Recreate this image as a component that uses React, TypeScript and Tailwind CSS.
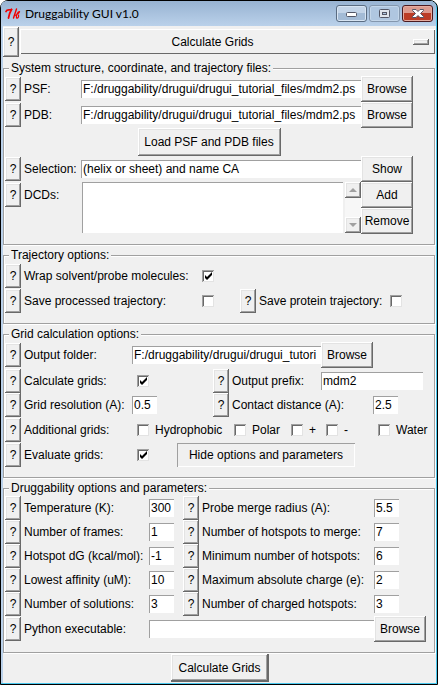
import { useId, type ReactNode } from "react";

const RAISED =
  "bg-[#f0f0f0] shadow-[inset_-1px_-1px_0_#696969,inset_1px_1px_0_#ffffff,inset_-2px_-2px_0_#a0a0a0,inset_2px_2px_0_#e3e3e3]";
const SUNKEN = "bg-white shadow-[inset_1px_1px_0_#a0a0a0]";

function Help({ topic, className = "h-6" }: { topic: string; className?: string }) {
  return (
    <button type="button" aria-label={`Help: ${topic}`} className={`w-4 shrink-0 ${RAISED} ${className}`}>
      ?
    </button>
  );
}

function PushButton({ children, className = "" }: { children: ReactNode; className?: string }) {
  return (
    <button type="button" className={`shrink-0 whitespace-nowrap ${RAISED} ${className}`}>
      {children}
    </button>
  );
}

function Entry({ id, value, className = "" }: { id: string; value: string; className?: string }) {
  return (
    <input
      id={id}
      type="text"
      defaultValue={value}
      className={`h-[18px] min-w-0 pl-0.5 outline-none ${SUNKEN} ${className}`}
    />
  );
}

function Check({ id, checked = false }: { id: string; checked?: boolean }) {
  return (
    <span className="grid size-3 shrink-0">
      <input
        id={id}
        type="checkbox"
        defaultChecked={checked}
        className="peer col-start-1 row-start-1 size-3 appearance-none bg-white shadow-[inset_1px_1px_0_#a0a0a0,inset_-1px_-1px_0_#e3e3e3,inset_2px_2px_0_#696969]"
      />
      <svg
        viewBox="0 0 12 12"
        className="pointer-events-none col-start-1 row-start-1 hidden size-3 peer-checked:block"
      >
        <path d="M3 5v3l2 2 5-5V2L5 7z" fill="#000" />
      </svg>
    </span>
  );
}

function Group({ title, children, className = "" }: { title: string; children: ReactNode; className?: string }) {
  return (
    <fieldset
      className={`mr-px min-w-0 border border-[#a0a0a0] pl-px shadow-[1px_1px_0_#ffffff,inset_1px_1px_0_#ffffff] ${className}`}
    >
      <legend className="ml-1 h-4 bg-[#f0f0f0] px-0.5 leading-4">{title}</legend>
      {children}
    </fieldset>
  );
}

function Field({
  label,
  labelWidth,
  children,
  className = "",
}: {
  label: string;
  labelWidth: string;
  children: (id: string) => ReactNode;
  className?: string;
}) {
  const id = useId();
  return (
    <div className={`flex items-center ${className}`}>
      <Help topic={label} />
      <label htmlFor={id} className={`shrink-0 whitespace-nowrap pl-[3px] ${labelWidth}`}>
        {label}
      </label>
      {children(id)}
    </div>
  );
}

function GridOption({ label, className = "" }: { label: string; className?: string }) {
  const id = useId();
  return (
    <span className={`flex shrink-0 items-center gap-1.5 ${className}`}>
      <Check id={id} />
      <label htmlFor={id}>{label}</label>
    </span>
  );
}

function TitleBar() {
  const frame = "flex h-[17px] w-[31px] items-center justify-center rounded-[3px] border";
  return (
    <header className="flex h-[25px] items-center rounded-t-md bg-gradient-to-b from-[#98b3d2] to-[#bad1ea] pr-[3px] pl-1">
      <svg viewBox="0 0 16 16" className="size-4 shrink-0" fill="none" stroke="#f00000" strokeLinecap="round">
        <path d="M1 5.500C2 3 4 4.500 6.500 3.500" strokeWidth="1.800" />
        <path d="M6.500 3.500C5 6 4 9 3.500 12" strokeWidth="1.800" />
        <path d="M11.500 3L8.500 12" strokeWidth="1.400" />
        <path d="M9.500 9.500C11.500 9 14.500 7 14.500 5.500C13 5.500 11 8.500 11.500 12C13 12.500 14 11 13.500 9" strokeWidth="1.200" />
      </svg>
      <h1 className="ml-1 flex-1 font-['Lato','Open_Sans',sans-serif] text-[12px]">Druggability GUI v1.0</h1>
      <div className="flex gap-0.5">
        <button
          type="button"
          aria-label="Minimize"
          className={`${frame} border-[#5a6c82] bg-gradient-to-b from-[#c3d4e8] from-50% to-[#a3bbd6] to-50% shadow-[inset_0_0_0_1px_#d8e5f3]`}
        >
          <svg viewBox="0 0 11 5" className="mt-0.5 h-[5px] w-[11px]">
            <rect x="0.5" y="0.5" width="10" height="4" rx="1" fill="#fff" stroke="#535666" />
          </svg>
        </button>
        <button
          type="button"
          aria-label="Maximize"
          className={`${frame} border-[#8497ae] bg-[#afc6e0] shadow-[inset_0_0_0_1px_#c3d6ea]`}
        >
          <svg viewBox="0 0 11 9" className="h-[9px] w-[11px]">
            <rect x="0.5" y="0.5" width="10" height="8" rx="1" fill="#dfe4ec" stroke="#535666" />
            <rect x="3.500" y="3.500" width="4" height="2" fill="#afc6e0" stroke="#535666" />
          </svg>
        </button>
        <button
          type="button"
          aria-label="Close"
          className={`${frame} border-[#4b1a20] bg-gradient-to-b from-[#dc9a8e] from-50% to-[#bb3c26] to-50% shadow-[inset_0_0_0_1px_#e5aca0]`}
        >
          <svg viewBox="0 0 12 9" className="h-[9px] w-3">
            <path
              d="M0.5 0.5H4L6 2.500L8 0.500H11.500V1.500L8.500 4.500L11.500 7.500V8.500H8L6 6.500L4 8.500H0.500V7.500L3.500 4.500L0.500 1.500Z"
              fill="#fff"
              stroke="#535666"
            />
          </svg>
        </button>
      </div>
    </header>
  );
}

const PARAMETERS = [
  ["Temperature (K):", "300", "Probe merge radius (A):", "5.5"],
  ["Number of frames:", "1", "Number of hotspots to merge:", "7"],
  ["Hotspot dG (kcal/mol):", "-1", "Minimum number of hotspots:", "6"],
  ["Lowest affinity (uM):", "10", "Maximum absolute charge (e):", "2"],
  ["Number of solutions:", "3", "Number of charged hotspots:", "3"],
];

const MODEL_FILE = "F:/druggability/drugui/drugui_tutorial_files/mdm2.ps";

export default function App() {
  return (
    <div className="rounded-t-lg border border-black bg-[#49c8ee] pr-px pb-px font-['Liberation_Sans',Arial,sans-serif] text-[12px] leading-4 text-black">
      <div className="rounded-t-md bg-[#bad1ea]">
        <TitleBar />
        <main className="ml-0.5 bg-[#f0f0f0] pt-px pb-px">
          <div className="flex items-start gap-px pr-px">
            <Help topic="Calculation type" className="h-[30px]" />
            <div className="mt-0.5 flex h-[25px] min-w-0 flex-1 items-center pr-1.5 shadow-[inset_1px_1px_0_#ffffff,inset_-1px_-1px_0_#696969]">
              <select
                aria-label="Calculation type"
                className="min-w-0 flex-1 appearance-none pr-2 text-center outline-none [text-align-last:center]"
              >
                <option>Calculate Grids</option>
              </select>
              <span className={`h-1.5 w-4 ${RAISED}`} />
            </div>
          </div>

          <Group title="System structure, coordinate, and trajectory files:" className="mt-[3px] pr-[21px] pb-[10px]">
            {["PSF:", "PDB:"].map((label) => (
              <Field key={label} label={label} labelWidth="w-[60px]" className="h-[26px]">
                {(id) => (
                  <>
                    <Entry id={id} value={MODEL_FILE} className="flex-1" />
                    <PushButton className="h-[26px] w-[52px]">Browse</PushButton>
                  </>
                )}
              </Field>
            ))}
            <div className="flex justify-center">
              <PushButton className="h-7 w-[143px]">Load PSF and PDB files</PushButton>
            </div>
            <Field label="Selection:" labelWidth="w-[60px]" className="h-[26px]">
              {(id) => (
                <>
                  <Entry id={id} value="(helix or sheet) and name CA" className="flex-1" />
                  <PushButton className="h-[26px] w-[52px]">Show</PushButton>
                </>
              )}
            </Field>
            <div className="flex h-[52px]">
              <Help topic="DCDs" className="mt-px h-6" />
              <label htmlFor="dcds" className="w-[61px] shrink-0 pt-[5px] pl-[3px]">
                DCDs:
              </label>
              <select
                id="dcds"
                multiple
                className={`h-[51px] min-w-0 flex-1 appearance-none overflow-hidden outline-none ${SUNKEN}`}
              />
              <div className="ml-0.5 flex h-[51px] w-4 flex-col justify-between bg-[#f7f7f7]">
                <button type="button" aria-label="Scroll up" className={`grid h-4 place-items-center ${RAISED}`}>
                  <svg viewBox="0 0 8 4" className="h-1 w-2">
                    <path d="M4 0l4 4H0z" fill="#a0a0a0" />
                  </svg>
                </button>
                <button type="button" aria-label="Scroll down" className={`grid h-4 place-items-center ${RAISED}`}>
                  <svg viewBox="0 0 8 4" className="h-1 w-2">
                    <path d="M4 4l4-4H0z" fill="#a0a0a0" />
                  </svg>
                </button>
              </div>
              <div className="flex flex-col">
                <PushButton className="h-[26px] w-[52px]">Add</PushButton>
                <PushButton className="h-[26px] w-[52px]">Remove</PushButton>
              </div>
            </div>
          </Group>

          <Group title="Trajectory options:" className="mt-0.5 pb-[10px]">
            <Field label="Wrap solvent/probe molecules:" labelWidth="w-[181px]" className="h-[25px]">
              {(id) => <Check id={id} checked />}
            </Field>
            <div className="flex">
              <Field label="Save processed trajectory:" labelWidth="w-[181px]" className="h-[25px] w-[235px]">
                {(id) => <Check id={id} />}
              </Field>
              <Field label="Save protein trajectory:" labelWidth="w-[134px]" className="h-[25px]">
                {(id) => <Check id={id} />}
              </Field>
            </div>
          </Group>

          <Group title="Grid calculation options:" className="mt-0.5 pr-1 pb-[10px]">
            <Field label="Output folder:" labelWidth="w-[111px]" className="h-[26px] pr-[57px]">
              {(id) => (
                <>
                  <Entry id={id} value="F:/druggability/drugui/drugui_tutori" className="flex-1" />
                  <PushButton className="h-[26px] w-[52px]">Browse</PushButton>
                </>
              )}
            </Field>
            <div className="flex">
              <Field label="Calculate grids:" labelWidth="w-[116px]" className="h-[25px] w-[208px]">
                {(id) => <Check id={id} checked />}
              </Field>
              <Field label="Output prefix:" labelWidth="w-[92px]" className="h-[25px] min-w-0 flex-1 pr-[7px]">
                {(id) => <Entry id={id} value="mdm2" className="flex-1" />}
              </Field>
            </div>
            <div className="flex">
              <Field label="Grid resolution (A):" labelWidth="w-[111px]" className="h-6 w-[208px]">
                {(id) => <Entry id={id} value="0.5" className="w-[25px]" />}
              </Field>
              <Field label="Contact distance (A):" labelWidth="w-36" className="h-6">
                {(id) => <Entry id={id} value="2.5" className="w-[25px]" />}
              </Field>
            </div>
            <div className="flex h-[25px] items-center">
              <Help topic="Additional grids" />
              <span className="w-[116px] shrink-0 pl-[3px]">Additional grids:</span>
              <GridOption label="Hydrophobic" className="w-[97px]" />
              <GridOption label="Polar" className="w-[57px]" />
              <GridOption label="+" className="w-[35px]" />
              <GridOption label="-" className="w-[52px]" />
              <GridOption label="Water" />
            </div>
            <Field label="Evaluate grids:" labelWidth="w-[116px]" className="h-[25px]">
              {(id) => (
                <>
                  <Check id={id} checked />
                  <button
                    type="button"
                    className="ml-7 h-6 w-[178px] whitespace-nowrap bg-[#f0f0f0] shadow-[inset_1px_1px_0_#a0a0a0,inset_-1px_-1px_0_#ffffff]"
                  >
                    Hide options and parameters
                  </button>
                </>
              )}
            </Field>
          </Group>

          <Group title="Druggability options and parameters:" className="mt-0.5 pr-2 pb-[10px]">
            {PARAMETERS.map(([left, leftValue, right, rightValue]) => (
              <div key={left} className="flex">
                <Field label={left} labelWidth="w-32" className="h-6 w-[178px]">
                  {(id) => <Entry id={id} value={leftValue} className="w-[25px]" />}
                </Field>
                <Field label={right} labelWidth="w-[175px]" className="h-6">
                  {(id) => <Entry id={id} value={rightValue} className="w-[25px]" />}
                </Field>
              </div>
            ))}
            <Field label="Python executable:" labelWidth="w-32" className="h-[26px]">
              {(id) => (
                <>
                  <Entry id={id} value="" className="flex-1" />
                  <PushButton className="h-[26px] w-[52px]">Browse</PushButton>
                </>
              )}
            </Field>
          </Group>

          <div className="mt-px flex justify-center">
            <button
              type="button"
              className="h-7 w-[98px] bg-[#f0f0f0] whitespace-nowrap shadow-[inset_-2px_-2px_0_#696969,inset_1px_1px_0_#ffffff,inset_-3px_-3px_0_#a0a0a0,inset_2px_2px_0_#e3e3e3]"
            >
              Calculate Grids
            </button>
          </div>
        </main>
      </div>
    </div>
  );
}
